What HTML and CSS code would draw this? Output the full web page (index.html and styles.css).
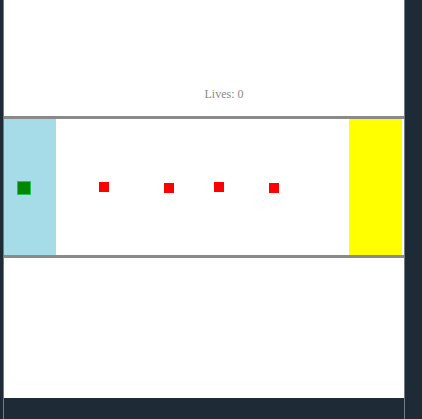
FILE: index.html
```html
<!DOCTYPE html>
<html>
<head>
<meta charset="utf-8">
<link rel="stylesheet" href="styles.css">
</head>
<body>
<div class="frame">
  <div class="stage">
    <div class="hud"><span class="lives">Lives: 0</span></div>
    <div class="track">
      <div class="start"></div>
      <div class="goal"></div>
      <div class="player"></div>
      <div class="enemy e1"></div>
      <div class="enemy e2"></div>
      <div class="enemy e3"></div>
      <div class="enemy e4"></div>
    </div>
  </div>
</div>
</body>
</html>
```
FILE: styles.css
```css
html, body {
  margin: 0;
  padding: 0;
  background: #1e2a35;
}
.frame {
  margin-left: 3px;
  width: 400px;
  height: 419px;
  border-left: 1px solid #6f7a84;
  border-right: 1px solid #6f7a84;
}
.stage {
  background: #fff;
  height: 398px;
  display: flex;
  flex-direction: column;
}
.hud {
  height: 116px;
  box-sizing: border-box;
  display: flex;
  align-items: flex-end;
  justify-content: center;
  padding-left: 40px;
  padding-bottom: 15px;
}
.lives {
  font-family: "Liberation Serif", serif;
  font-size: 12px;
  color: #8a8a8a;
  line-height: 14px;
}
.track {
  position: relative;
  height: 136px;
  border-top: 3px solid #8a8a8a;
  border-bottom: 3px solid #8a8a8a;
  display: flex;
  justify-content: space-between;
}
.start {
  width: 52px;
  background: #a6dbe8;
}
.goal {
  width: 53px;
  margin-right: 2px;
  background: #ffff00;
}
.player {
  position: absolute;
  left: 13px;
  top: 62px;
  width: 12px;
  height: 12px;
  background: #008800;
  border: 1px solid #2bbf5a;
}
.enemy {
  position: absolute;
  width: 10px;
  height: 10px;
  background: #ff0000;
}
.e1 { left: 95px; top: 63px; }
.e2 { left: 160px; top: 64px; }
.e3 { left: 210px; top: 63px; }
.e4 { left: 265px; top: 64px; }
```
